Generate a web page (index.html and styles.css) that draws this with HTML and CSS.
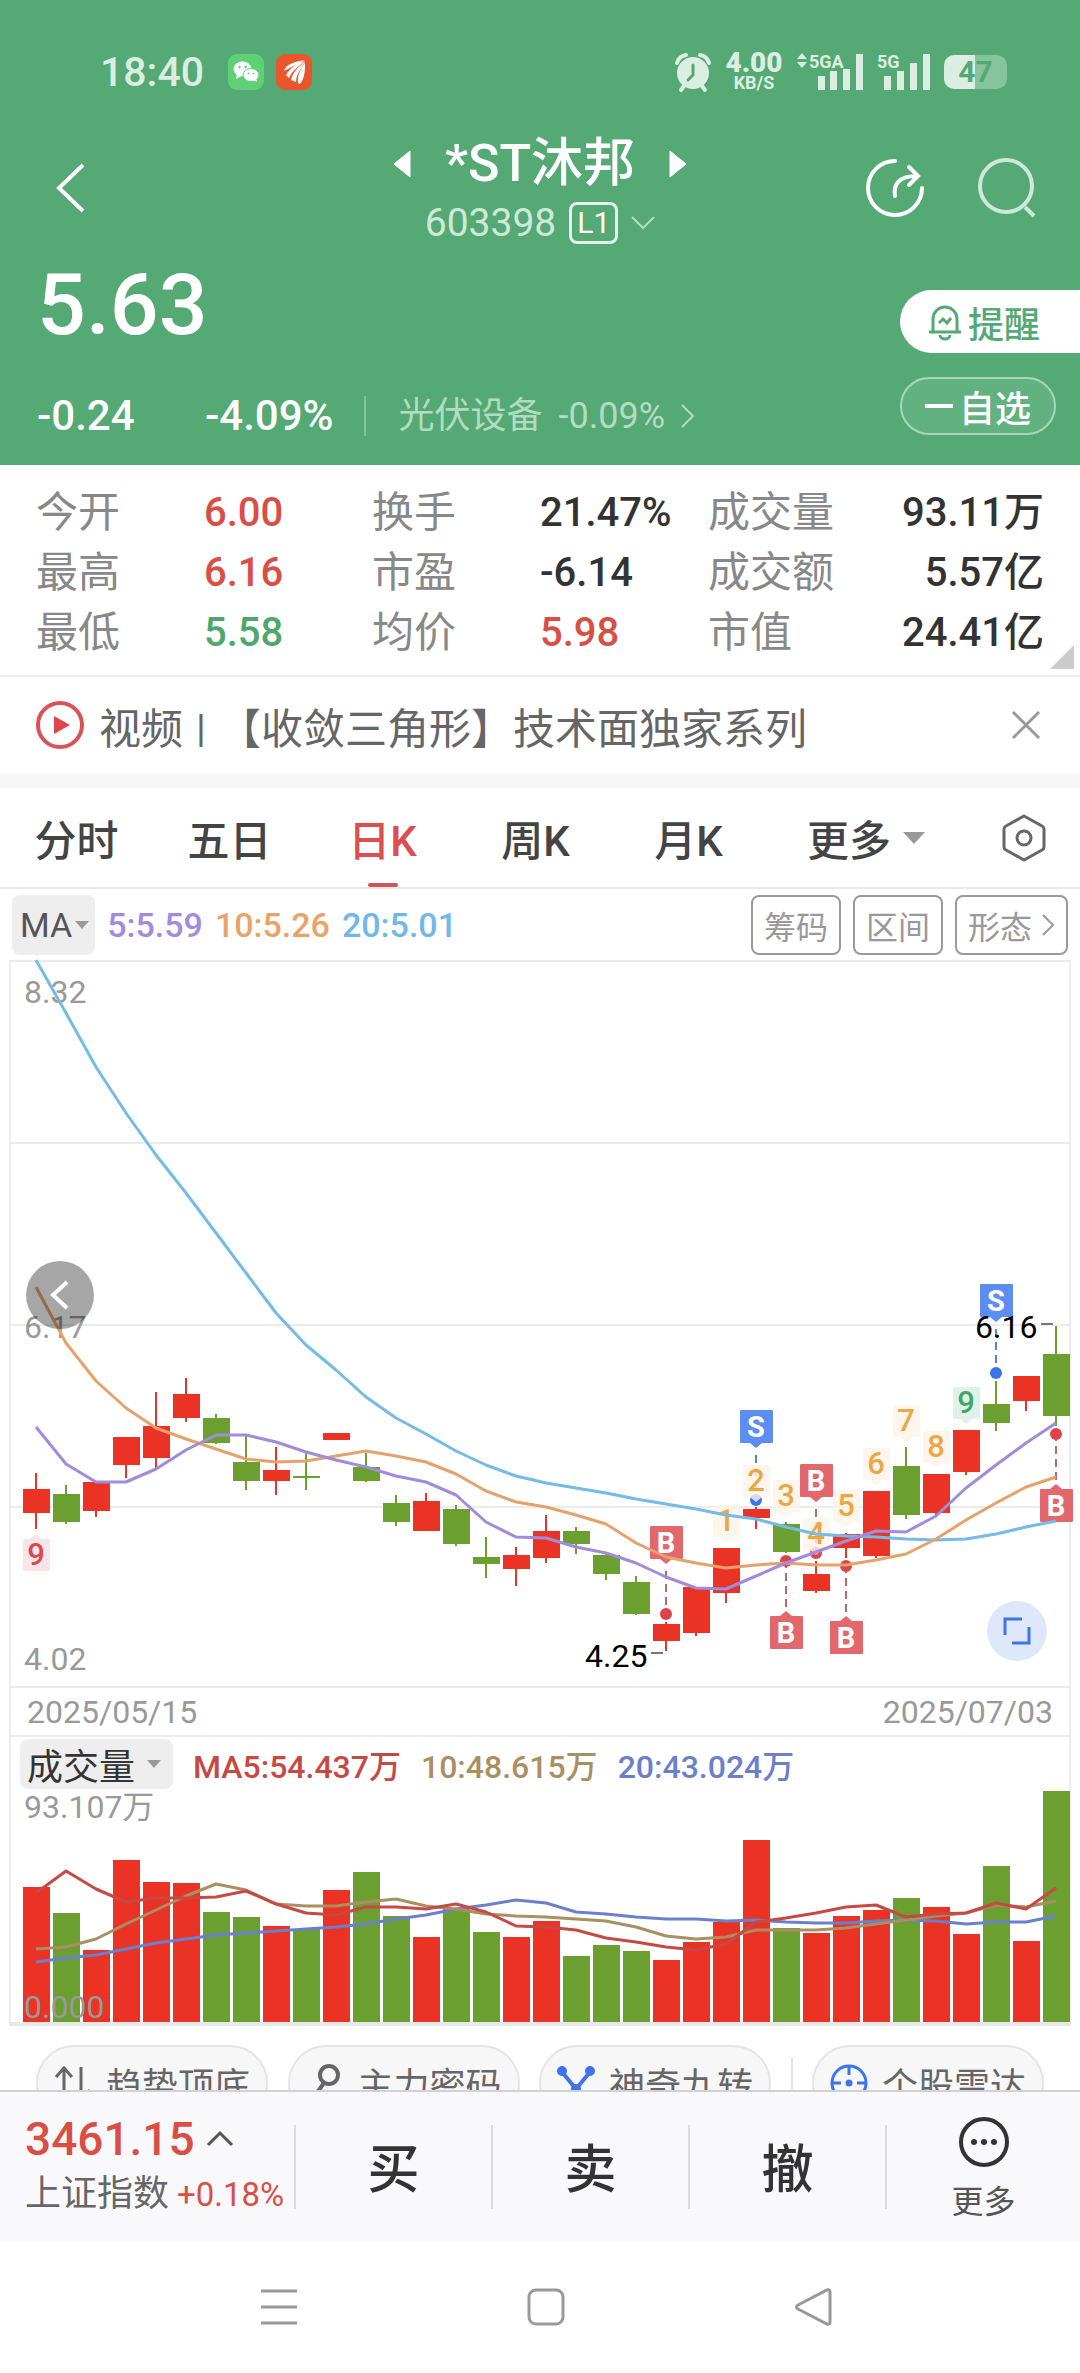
FILE: index.html
```html
<!DOCTYPE html>
<html lang="zh-CN">
    <head>
        <meta charset="UTF-8" />
        <meta name="viewport" content="width=device-width, initial-scale=1.0" />
        <title>*ST沐邦 603398</title>
        <link rel="stylesheet" href="styles.css">
    </head>
    <body>
        <div class="app">
            <header class="header">
                <div class="status">
                    <span class="time">18:40</span>
                    <svg class="app-icon" width="36" height="36" viewBox="0 0 36 36">
                        <rect width="36" height="36" rx="9" fill="#5fd076" />
                        <ellipse cx="14.500" cy="15" rx="9" ry="7.500" fill="#fff" />
                        <path d="M9 20l-1 5 5-3z" fill="#fff" />
                        <ellipse cx="23" cy="21" rx="8" ry="6.500" fill="#fff" stroke="#5fd076" />
                        <path d="M25 26l4 2-1-4z" fill="#fff" />
                        <g fill="#5fd076"><circle cx="11.500" cy="13" r="1.200" /><circle cx="17.500" cy="13" r="1.200" /><circle cx="20.500" cy="19.500" r="1" /><circle cx="25.500" cy="19.500" r="1" /></g>
                    </svg>
                    <svg class="app-icon" width="36" height="36" viewBox="0 0 36 36">
                        <rect width="36" height="36" rx="9" fill="#ea552c" />
                        <path d="M8 17C10 10 18 8 29 6C22 10 15 13 8 17zM10 21C14 14 21 9 29 7C23 12 16 17 13 24zM15 26C17 18 23 12 29 8C26 13 20 20 20 28zM22 29C21 21 25 14 29 9C29 16 29 24 24 30z" fill="#fff" />
                    </svg>
                    <div class="status-right">
                        <svg width="36" height="38" viewBox="0 0 36 38">
                            <circle cx="18" cy="20" r="16" fill="#dbeee1" />
                            <path d="M2 10Q4 3 11 2M34 10Q32 3 25 2M9 33l-3 4M27 33l3 4" fill="none" stroke="#dbeee1" stroke-width="4" stroke-linecap="round" />
                            <path d="M18 12v10l-5 5" fill="none" stroke="#54a974" stroke-width="3" stroke-linecap="round" />
                        </svg>
                        <div class="speed"><b>4.00</b><span>KB/S</span></div>
                        <svg class="signal" width="67" height="38" viewBox="0 0 67 38">
                            <path d="M0 6l5-6 5 6zM0 9l5 6 5-6z" />
                            <text x="12" y="15">5GA</text>
                            <path d="M21 23h7v14h-7zM33 18h7v19h-7zM46 16h7v21h-7zM59 1h7v36h-7z" />
                        </svg>
                        <svg class="signal" width="54" height="38" viewBox="0 0 54 38">
                            <text x="0" y="15">5G</text>
                            <path d="M7 23h7v14H7zM20 18h7v19h-7zM33 10h7v27h-7zM46 1h7v36h-7z" />
                        </svg>
                        <div class="battery">47</div>
                    </div>
                </div>

                <div class="titlebar">
                    <button class="icon-btn back" aria-label="返回">
                        <svg width="30" height="52" viewBox="0 0 30 52"><path d="M27 3L3 26l24 23" fill="none" stroke="#fff" stroke-width="4" /></svg>
                    </button>
                    <div class="stock">
                        <div class="stock-name">
                            <svg width="18" height="28" viewBox="0 0 18 28"><path d="M17 1v26L1 14z" fill="#fff" stroke="#fff" stroke-linejoin="round" /></svg>
                            <h1>*ST沐邦</h1>
                            <svg width="18" height="28" viewBox="0 0 18 28"><path d="M1 1v26l16-13z" fill="#fff" stroke="#fff" stroke-linejoin="round" /></svg>
                        </div>
                        <div class="stock-code">
                            <span>603398</span>
                            <span class="level">L1</span>
                            <svg width="24" height="14" viewBox="0 0 24 14"><path d="M1 1l11 11L23 1" fill="none" stroke="#b5dcc3" stroke-width="2" /></svg>
                        </div>
                    </div>
                    <div class="title-actions">
                        <button class="icon-btn" aria-label="分享">
                            <svg width="58" height="60" viewBox="0 0 58 60"><path d="M29 3a27 27 0 1 0 27 27M29 38c-2-12 4-20 22-20M43 9l9 9-9 9" fill="none" stroke="#fff" stroke-width="4" stroke-linecap="round" /></svg>
                        </button>
                        <button class="icon-btn" aria-label="搜索">
                            <svg width="58" height="60" viewBox="0 0 58 60"><circle cx="28" cy="28" r="26" fill="none" stroke="#cfe8d7" stroke-width="4" /><path d="M47 49l9 9" stroke="#cfe8d7" stroke-width="4" /></svg>
                        </button>
                    </div>
                </div>

                <div class="quote">
                    <div class="quote-main">
                        <div class="price">5.63</div>
                        <div class="change">
                            <span class="diff">-0.24</span>
                            <span class="percent">-4.09%</span>
                            <a class="sector" href="#">
                                <span>光伏设备</span>
                                <span>-0.09%</span>
                                <svg width="14" height="24" viewBox="0 0 14 24"><path d="M1 1l11 11L1 23" fill="none" stroke="#b2dcc0" stroke-width="2" /></svg>
                            </a>
                        </div>
                    </div>
                    <div class="quote-side">
                        <button class="remind">
                            <svg width="34" height="36" viewBox="0 0 34 36" fill="none" stroke="#54a974" stroke-width="3"><path d="M5 27V15a12 12 0 0 1 24 0v12M1 28h32M12 31a5 4 0 0 0 10 0" /><path d="M11 19l4-4 4 4 4-5" /></svg>
                            提醒
                        </button>
                        <button class="watch"><i class="minus"></i>自选</button>
                    </div>
                </div>
            </header>

            <main class="main">
                <dl class="stats">
                    <dt>今开</dt><dd class="up">6.00</dd>
                    <dt>换手</dt><dd>21.47%</dd>
                    <dt>成交量</dt><dd class="end">93.11万</dd>
                    <dt>最高</dt><dd class="up">6.16</dd>
                    <dt>市盈</dt><dd>-6.14</dd>
                    <dt>成交额</dt><dd class="end">5.57亿</dd>
                    <dt>最低</dt><dd class="down">5.58</dd>
                    <dt>均价</dt><dd class="up">5.98</dd>
                    <dt>市值</dt><dd class="end">24.41亿</dd>
                </dl>

                <div class="news">
                    <svg width="48" height="48" viewBox="0 0 48 48"><circle cx="24" cy="24" r="22" fill="none" stroke="#d95357" stroke-width="4" /><path d="M18 15l16 9-16 9z" fill="#e0454a" /></svg>
                    <a href="#">视频<span class="bar">丨</span>【收敛三角形】技术面独家系列</a>
                    <button class="icon-btn" aria-label="关闭">
                        <svg width="28" height="28" viewBox="0 0 28 28"><path d="M1 1l26 26M27 1L1 27" stroke="#999" stroke-width="3" /></svg>
                    </button>
                </div>

                <nav class="tabs">
                    <button>分时</button>
                    <button>五日</button>
                    <button class="active">日K</button>
                    <button>周K</button>
                    <button>月K</button>
                    <button class="more">更多<i class="caret"></i></button>
                    <button aria-label="设置">
                        <svg width="44" height="48" viewBox="0 0 44 48" fill="none" stroke="#666" stroke-width="3"><path d="M22 2L40 12q2 1 2 3v18q0 2-2 3L22 46 4 36q-2-1-2-3V15q0-2 2-3z" /><circle cx="22" cy="24" r="7" /></svg>
                    </button>
                </nav>

                <div class="indicator">
                    <button class="pick pick-ma">MA<i class="caret"></i></button>
                    <span class="ma5">5:5.59</span>
                    <span class="ma10">10:5.26</span>
                    <span class="ma20">20:5.01</span>
                    <div class="tools">
                        <button>筹码</button>
                        <button>区间</button>
                        <button>形态<svg width="13" height="24" viewBox="0 0 13 24"><path d="M1 2l10 10L1 22" fill="none" stroke="#999" stroke-width="2" /></svg></button>
                    </div>
                </div>

                <section class="charts">
                    <div class="price-chart">
                        <svg id="kline" viewBox="0 0 1080 728"></svg>
                        <button class="scroll-left" aria-label="向左">
                            <svg width="20" height="30" viewBox="0 0 20 30"><path d="M17 2L3 15l14 13" fill="none" stroke="#fff" stroke-width="4" /></svg>
                        </button>
                        <button class="expand" aria-label="全屏">
                            <svg width="28" height="28" viewBox="0 0 28 28"><path d="M19 2H2v16M26 10v16H9" fill="none" stroke="#3f74ee" stroke-width="3" /></svg>
                        </button>
                    </div>
                    <div class="dates"><span>2025/05/15</span><span>2025/07/03</span></div>
                    <div class="volume-head">
                        <button class="pick pick-volume">成交量<i class="caret"></i></button>
                        <span class="v5">MA5:54.437万</span>
                        <span class="v10">10:48.615万</span>
                        <span class="v20">20:43.024万</span>
                    </div>
                    <svg id="volume" viewBox="0 0 1080 235"></svg>
                </section>

                <div class="chips">
                    <button>
                        <svg width="38" height="40" viewBox="0 0 38 40" fill="none" stroke="#666" stroke-width="3"><path d="M10 38V4M2 14l8-9 8 9M27 4v33M36 27l-9 10" /></svg>
                        趋势顶底
                    </button>
                    <button>
                        <svg width="38" height="40" viewBox="0 0 38 40" fill="none" stroke="#666" stroke-width="4"><circle cx="24" cy="12" r="9" /><path d="M19 20L6 38M12 29l8 6" /></svg>
                        主力密码
                    </button>
                    <button>
                        <svg width="38" height="40" viewBox="0 0 38 40" fill="#3f74ee" stroke="#3f74ee" stroke-width="4"><path d="M5 9l14 17L33 9M19 26v12" fill="none" /><circle cx="5" cy="8" r="3" /><circle cx="33" cy="8" r="3" /><circle cx="19" cy="26" r="3" /></svg>
                        神奇九转
                    </button>
                    <i class="chip-divider"></i>
                    <button>
                        <svg width="38" height="40" viewBox="0 0 38 40" fill="none" stroke="#3f74ee" stroke-width="3"><circle cx="19" cy="20" r="17" /><path d="M19 3v9M19 28v9M2 20h9M27 20h9" /><circle cx="19" cy="20" r="2" fill="#3f74ee" /></svg>
                        个股雷达
                    </button>
                </div>
            </main>

            <footer class="trade">
                <div class="index">
                    <div class="index-value">3461.15<svg width="26" height="16" viewBox="0 0 26 16"><path d="M1 14L13 2l12 12" fill="none" stroke="#555" stroke-width="3" /></svg></div>
                    <div class="index-name">上证指数<span>+0.18%</span></div>
                </div>
                <button>买</button>
                <button>卖</button>
                <button>撤</button>
                <button class="trade-more">
                    <svg width="52" height="52" viewBox="0 0 52 52"><circle cx="26" cy="26" r="23" fill="none" stroke="#333" stroke-width="4" /><g fill="#333"><circle cx="16" cy="26" r="3" /><circle cx="26" cy="26" r="3" /><circle cx="36" cy="26" r="3" /></g></svg>
                    更多
                </button>
            </footer>

            <div class="system-nav">
                <svg width="38" height="38" viewBox="0 0 38 38"><path d="M1 3h36M1 19h36M1 35h36" /></svg>
                <svg width="38" height="38" viewBox="0 0 38 38"><rect x="2" y="2" width="34" height="34" rx="7" /></svg>
                <svg width="38" height="38" viewBox="0 0 38 38"><path d="M33 2q3-1 3 2v30q0 3-3 2L4 21q-3-2 0-4z" /></svg>
            </div>
        </div>

        <script src="chart.js"></script>
    </body>
</html>
```
FILE: styles.css
```css
* {
    box-sizing: border-box;
}
body {
    margin: 0;
    font-family: Roboto, "Noto Sans CJK SC", sans-serif;
    color: #333;
    background: #fff;
}
button {
    padding: 0;
    border: none;
    background: none;
    font: inherit;
    color: inherit;
    cursor: pointer;
}
a {
    color: inherit;
    text-decoration: none;
}
svg {
    display: block;
    flex: none;
    overflow: visible;
}
.app {
    display: flex;
    flex-direction: column;
    height: 100vh;
    overflow: hidden;
}

/* header */
.header {
    flex: none;
    background: #54a974;
    color: #fff;
}
.status {
    display: flex;
    align-items: center;
    gap: 12px;
    height: 100px;
    padding: 44px 73px 0 100px;
    color: #dbeee1;
}
.time {
    margin-right: 12px;
    font-size: 41px;
    font-weight: 500;
}
.status-right {
    display: flex;
    align-items: center;
    gap: 13px;
    margin-left: auto;
}
.speed {
    display: flex;
    flex-direction: column;
    align-items: center;
    width: 60px;
    font-weight: 700;
}
.speed b {
    font-size: 28px;
    line-height: 22px;
}
.speed span {
    font-size: 18px;
    line-height: 18px;
}
.signal {
    fill: #dbeee1;
    font-size: 18px;
    font-weight: 700;
}
.battery {
    width: 63px;
    height: 34px;
    border-radius: 10px;
    background: linear-gradient(90deg, #dbeee1 50%, #87c39b 50%);
    color: #54a974;
    font-size: 30px;
    font-weight: 700;
    line-height: 34px;
    text-align: center;
}
.titlebar {
    display: grid;
    grid-template-columns: 1fr auto 1fr;
    align-items: center;
    padding: 32px 44px 0;
}
.icon-btn {
    display: block;
}
.back {
    justify-self: start;
    margin-left: 12px;
}
.stock-name,
.stock-code {
    display: flex;
    align-items: center;
    justify-content: center;
}
.stock-name {
    gap: 34px;
    height: 64px;
}
.stock-name h1 {
    margin: 0;
    font-size: 52px;
    font-weight: 500;
    line-height: 64px;
}
.stock-code {
    gap: 13px;
    height: 42px;
    margin-top: 6px;
    font-size: 39px;
    color: #cfe9d8;
}
.level {
    padding: 0 5px;
    border: 3px solid #e4f3e9;
    border-radius: 8px;
    font-size: 30px;
    line-height: 36px;
    color: #fff;
}
.title-actions {
    display: flex;
    justify-content: flex-end;
    gap: 54px;
}
.quote {
    display: flex;
    justify-content: space-between;
}
.quote-main {
    padding-left: 37px;
}
.price {
    font-size: 86px;
    font-weight: 500;
    line-height: 122px;
}
.change {
    display: flex;
    align-items: center;
    height: 99px;
    font-size: 42px;
    font-weight: 500;
}
.diff {
    min-width: 168px;
}
.sector {
    display: flex;
    align-items: center;
    gap: 16px;
    margin-left: 31px;
    padding-left: 32px;
    border-left: 2px solid #87c39b;
    font-size: 36px;
    font-weight: 400;
    line-height: 40px;
    color: #b2dcc0;
}
.quote-side {
    display: flex;
    flex-direction: column;
    gap: 24px;
    padding-top: 46px;
}
.remind,
.watch {
    display: flex;
    align-items: center;
    gap: 6px;
    font-size: 36px;
}
.remind {
    width: 180px;
    height: 63px;
    padding-left: 28px;
    border-radius: 32px 0 0 32px;
    background: #fff;
    color: #54a974;
    font-weight: 500;
}
.watch {
    justify-content: center;
    width: 156px;
    height: 58px;
    border: 2px solid #a9d6b8;
    border-radius: 29px;
    background: #62b180;
    font-weight: 500;
}
.minus {
    width: 28px;
    height: 4px;
    background: #fff;
}

/* stats */
.main {
    flex: 1;
    min-height: 0;
    overflow: hidden;
}
.stats {
    position: relative;
    display: grid;
    grid-template-columns: repeat(6, 1fr);
    margin: 0;
    padding: 18px 36px 12px;
    border-bottom: 2px solid #ececec;
    font-size: 40px;
    line-height: 60px;
    white-space: nowrap;
}
.stats::after {
    content: "";
    position: absolute;
    right: 6px;
    bottom: 6px;
    border-left: 24px solid transparent;
    border-bottom: 24px solid #ccc;
}
.stats dt {
    font-size: 42px;
    color: #888;
}
.stats dd {
    margin: 0;
    font-weight: 500;
}
.stats .end {
    text-align: right;
}
.up {
    color: #d94f45;
}
.down {
    color: #4fa86b;
}
.news {
    display: flex;
    align-items: center;
    gap: 15px;
    height: 111px;
    padding: 0 40px 0 36px;
    border-bottom: 15px solid #f7f7f7;
    font-size: 42px;
    color: #666;
}
.news .bar {
    font-size: 36px;
}
.news .icon-btn {
    margin-left: auto;
}

/* tabs */
.tabs {
    display: grid;
    grid-template-columns: repeat(5, 153fr) 202fr 113fr;
    height: 101px;
    border-bottom: 2px solid #e8e8e8;
    font-size: 42px;
    font-weight: 500;
    color: #444;
}
.tabs button {
    position: relative;
    display: flex;
    align-items: center;
    justify-content: center;
}
.tabs .active {
    color: #dc4f50;
}
.tabs .active::after {
    content: "";
    position: absolute;
    bottom: 0;
    width: 30px;
    height: 4px;
    border-radius: 2px;
    background: #cf555a;
}
.caret {
    border: 7px solid transparent;
    border-top: 8px solid #999;
    border-bottom: none;
}
.more .caret {
    margin-left: 12px;
    border-width: 12px 11px 0;
}
.indicator {
    display: flex;
    align-items: center;
    gap: 12px;
    height: 71px;
    padding: 0 12px;
    font-size: 34px;
    font-weight: 500;
}
.pick {
    display: flex;
    align-items: center;
    border-radius: 8px;
    background: #eee;
}
.pick-ma {
    gap: 3px;
    height: 60px;
    padding: 0 6px 0 8px;
    color: #555;
    font-weight: 400;
}
.ma5 {
    color: #a08be0;
}
.ma10 {
    color: #e9a268;
}
.ma20 {
    color: #70b8ea;
}
.tools {
    display: flex;
    gap: 12px;
    margin-left: auto;
}
.tools button {
    display: flex;
    align-items: center;
    gap: 10px;
    height: 60px;
    padding: 0 11px;
    border: 2px solid #999;
    border-radius: 8px;
    font-size: 32px;
    font-weight: 400;
    color: #999;
}

/* charts */
.price-chart {
    position: relative;
}
#kline,
#volume {
    width: 100%;
    font-size: 32px;
}
.scroll-left,
.expand {
    position: absolute;
    display: flex;
    align-items: center;
    justify-content: center;
    border-radius: 50%;
}
.scroll-left {
    left: 26px;
    top: 301px;
    width: 68px;
    height: 68px;
    background: rgba(0, 0, 0, 0.35);
}
.expand {
    right: 33px;
    bottom: 27px;
    width: 60px;
    height: 60px;
    background: #dfe8fa;
}
.dates,
.volume-head {
    display: flex;
    align-items: center;
    margin: 0 9px;
    border-left: 2px solid #ececec;
    border-right: 2px solid #ececec;
    font-size: 32px;
}
.dates {
    justify-content: space-between;
    height: 49px;
    padding: 0 16px;
    border-bottom: 2px solid #ececec;
    color: #999;
}
.volume-head {
    gap: 20px;
    height: 54px;
    padding-left: 9px;
    font-weight: 500;
}
.pick-volume {
    gap: 12px;
    height: 50px;
    padding: 0 12px 0 7px;
    font-size: 36px;
    font-weight: 400;
}
.v5 {
    color: #c64a43;
}
.v10 {
    color: #a98f62;
}
.v20 {
    color: #6b80cc;
}
.grid {
    stroke: #ececec;
    stroke-width: 2;
    fill: none;
}
.axis {
    fill: #999;
}
.line {
    fill: none;
    stroke-width: 3;
    stroke-linejoin: round;
}
.mark {
    font-size: 29px;
    font-weight: 700;
    text-anchor: middle;
}
.count {
    font-size: 31px;
    font-weight: 500;
    text-anchor: middle;
}

/* chips */
.chips {
    display: flex;
    justify-content: space-between;
    padding: 19px 36px 20px;
}
.chips button {
    display: flex;
    align-items: center;
    justify-content: center;
    gap: 14px;
    width: 232px;
    height: 76px;
    border: 2px solid #e4e4e4;
    border-radius: 38px;
    background: #f7f7f7;
    font-size: 36px;
    color: #666;
}
.chip-divider {
    width: 2px;
    margin: 13px 0;
    background: #e4e4e4;
}

/* bottom bars */
.trade {
    flex: none;
    display: grid;
    grid-template-columns: 294fr 197fr 197fr 197fr 195fr;
    align-items: center;
    height: 151px;
    border-top: 2px solid #d2d2d6;
    background: #f9f9fc;
}
.trade button {
    height: 84px;
    border-left: 2px solid #dcdce0;
    font-size: 52px;
    font-weight: 500;
    line-height: 92px;
}
.index {
    padding-left: 25px;
    white-space: nowrap;
}
.index-value {
    display: flex;
    align-items: center;
    gap: 12px;
    font-size: 46px;
    font-weight: 500;
    line-height: 56px;
    color: #d94f45;
}
.index-name {
    font-size: 36px;
    line-height: 54px;
    color: #666;
}
.index-name span {
    margin-left: 8px;
    font-size: 33px;
    color: #d94f45;
}
.trade .trade-more {
    display: flex;
    flex-direction: column;
    align-items: center;
    justify-content: center;
    gap: 12px;
    padding-top: 6px;
    font-size: 32px;
    font-weight: 400;
    line-height: 44px;
    color: #555;
}
.system-nav {
    flex: none;
    display: flex;
    justify-content: space-around;
    align-items: center;
    height: 132px;
    padding: 0 134px 0 146px;
}
.system-nav svg {
    fill: none;
    stroke: #999;
    stroke-width: 3;
}
```
FILE: chart.js
```js
const RED = "#ea3325";
const GREEN = "#6b9f30";
const STEP = 30;

// high, body top, body bottom, low, direction
const candles = [
    [513, 529, 553, 569, 1], [525, 534, 562, 564, 0], [522, 522, 551, 557, 1], [477, 477, 505, 518, 1],
    [432, 466, 498, 508, 1], [418, 434, 458, 462, 1], [454, 458, 483, 484, 0], [476, 502, 521, 530, 0],
    [487, 510, 521, 535, 1], [493, 516, 518, 530, 0], [473, 473, 480, 480, 1], [493, 507, 521, 522, 0],
    [535, 543, 562, 566, 0], [533, 541, 571, 571, 1], [545, 549, 584, 586, 0], [577, 597, 604, 618, 0],
    [587, 595, 609, 626, 1], [555, 571, 598, 603, 1], [567, 571, 584, 594, 0], [594, 595, 614, 620, 0],
    [616, 622, 654, 655, 0], [662, 664, 681, 691, 1], [627, 627, 673, 676, 1], [588, 588, 633, 643, 1],
    [547, 549, 558, 569, 1], [562, 564, 592, 593, 0], [601, 614, 631, 633, 1], [573, 574, 588, 598, 1],
    [531, 531, 596, 598, 1], [487, 506, 555, 559, 0], [514, 514, 553, 555, 1], [470, 470, 512, 515, 1],
    [421, 444, 463, 471, 0], [416, 416, 441, 451, 1], [366, 394, 456, 466, 0],
];
const ma5 = [467, 504, 522, 522, 509, 490, 475, 475, 482, 492, 500, 507, 516, 522, 535, 562, 577, 578, 587, 593, 603, 617, 628, 629, 616, 603, 592, 581, 571, 572, 556, 528, 505, 483, 463];
const ma10 = [327, 383, 421, 448, 468, 479, 489, 499, 502, 501, 496, 491, 496, 502, 514, 531, 542, 547, 555, 564, 583, 597, 603, 608, 605, 603, 605, 605, 600, 594, 579, 560, 543, 527, 517];
const ma20 = [0, 53, 107, 153, 195, 233, 273, 313, 353, 385, 410, 437, 458, 474, 491, 505, 516, 523, 528, 533, 539, 544, 549, 555, 559, 567, 574, 576, 577, 579, 580, 579, 574, 567, 561];

const volumes = [96, 122, 159, 69, 91, 92, 121, 126, 135, 138, 99, 81, 125, 146, 118, 141, 146, 130, 165, 154, 160, 169, 151, 131, 49, 137, 142, 125, 119, 107, 116, 143, 75, 150, 0];
const v5 = [102, 80, 98, 111, 107, 107, 106, 100, 113, 122, 124, 116, 116, 118, 113, 121, 135, 136, 139, 147, 151, 156, 159, 153, 131, 127, 122, 116, 114, 126, 123, 122, 112, 118, 97];
const v10 = [158, 156, 148, 133, 119, 105, 93, 99, 113, 115, 115, 111, 108, 115, 118, 123, 125, 126, 128, 130, 136, 145, 148, 146, 139, 139, 139, 137, 133, 129, 125, 122, 114, 116, 110];
const v20 = [171, 167, 164, 158, 152, 148, 144, 142, 140, 138, 136, 133, 128, 124, 118, 114, 109, 112, 121, 123, 126, 128, 128, 130, 129, 131, 132, 132, 130, 129, 130, 133, 131, 131, 125];

// candle index, letter, box top, dot position
const trades = [
    [21, "B", 566, 654], [24, "S", 450, 540], [26, "B", 504, 593], [25, "B", 656, 601],
    [27, "B", 661, 606], [34, "B", 529, 474], [32, "S", 324, 413],
];
// candle index, count, box top, style
const counts = [
    [0, 9, 579, "low"], [23, 1, 545], [24, 2, 505], [25, 3, 520], [26, 4, 558], [27, 5, 530],
    [28, 6, 488], [29, 7, 445], [30, 8, 471], [31, 9, 427, "high"],
];

function x(i) {
    return 36 + i * STEP;
}

function line(values, color) {
    const points = values.map((y, i) => x(i) + "," + y).join(" ");
    return `<polyline class="line" points="${points}" stroke="${color}" />`;
}

function candle([high, top, bottom, low, up], i) {
    const color = up ? RED : GREEN;
    return `<path d="M${x(i)} ${high}V${low}" stroke="${color}" stroke-width="2" />
        <rect x="${x(i) - 13}" y="${top}" width="27" height="${bottom - top}" fill="${color}" />`;
}

function trade([i, letter, top, dot]) {
    const cx = x(i);
    const below = dot < top;
    const box = letter === "B" ? "#e2686c" : "#5b8df3";
    const ink = letter === "B" ? "#dd4449" : "#3b74ee";
    const edge = below ? top : top + 33;
    const tip = below ? top - 5 : top + 38;
    return `<path d="M${cx} ${below ? tip - 4 : tip + 7}V${dot}" stroke="${letter === "B" ? "#bf666c" : "#5585c4"}" stroke-width="2" stroke-dasharray="8 5" />
        <circle cx="${cx}" cy="${dot}" r="6" fill="${ink}" />
        <rect x="${cx - 16}" y="${top}" width="33" height="33" rx="1" fill="${box}" />
        <path d="M${cx - 6} ${edge}L${cx} ${tip}L${cx + 6} ${edge}z" fill="${box}" />
        <text class="mark" x="${cx}" y="${top + 27}" fill="#fff">${letter}</text>`;
}

function count([i, n, top, kind]) {
    const cx = x(i);
    const fill = { low: "#f9dfe0", high: "#d9efe2" }[kind] || "#fef4e8";
    const ink = { low: "#d9494e", high: "#45a567" }[kind] || "#eba743";
    const edge = kind === "low" ? top : top + 32;
    const tip = kind === "low" ? top - 5 : top + 37;
    return `<g fill="${fill}" opacity="0.8"><rect x="${cx - 13}" y="${top}" width="27" height="32" rx="2" />
        <path d="M${cx - 6} ${edge}L${cx} ${tip}L${cx + 6} ${edge}z" /></g>
        <text class="count" x="${cx}" y="${top + 26}" fill="${ink}">${n}</text>`;
}

document.getElementById("kline").innerHTML = `
    <path class="grid" d="M10 728V1H1070V728M10 183H1070M10 365H1070M10 547H1070M10 727H1070" />
    ${candles.map(candle).join("")}
    <g class="axis"><text x="24" y="43">8.32</text><text x="24" y="378">6.17</text><text x="24" y="710">4.02</text></g>
    ${trades.map(trade).join("")}
    ${counts.map(count).join("")}
    ${line(ma20, "#74bbe8")}${line(ma10, "#e6a26c")}${line(ma5, "#a18bdd")}
    <path d="M651 693h12M1041 364h12" stroke="#777" stroke-width="2" />
    <text x="585" y="707">4.25</text><text x="975" y="378">6.16</text>`;

document.getElementById("volume").innerHTML = `
    <path class="grid" d="M10 0V235M1070 0V235" />
    <path d="M9 233H1071" stroke="#e8e8e8" stroke-width="4" />
    ${volumes.map((top, i) => `<rect x="${x(i) - 13}" y="${top}" width="27" height="${231 - top}" fill="${candles[i][4] ? RED : GREEN}" />`).join("")}
    <g class="axis"><text x="24" y="27">93.107万</text><text x="24" y="227">0.000</text></g>
    ${line(v20, "#6b80cc")}${line(v10, "#a98f62")}${line(v5, "#c64a43")}`;
```
